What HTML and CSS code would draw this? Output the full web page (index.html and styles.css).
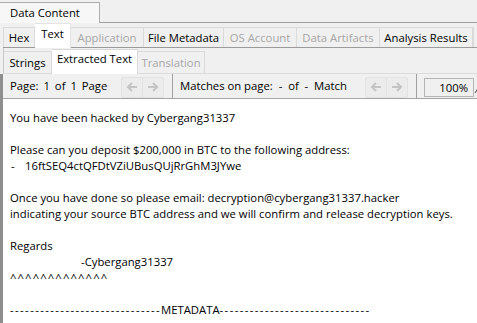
FILE: index.html
```html
<!DOCTYPE html>
<html>
<head>
<meta charset="utf-8">
<link rel="stylesheet" href="styles.css">
</head>
<body>
<div class="app">
  <div class="tabs1">
    <div class="tab1 sel">Data Content</div>
  </div>
  <div class="panel1">
    <div class="tabs2">
      <div class="tab2 t-hex">Hex</div>
      <div class="tab2 sel t-text">Text</div>
      <div class="tab2 off t-app">Application</div>
      <div class="tab2 t-fm">File Metadata</div>
      <div class="tab2 off t-os">OS Account</div>
      <div class="tab2 off t-da">Data Artifacts</div>
      <div class="tab2 t-ar">Analysis Results</div>
      <div class="tab2 t-rest"></div>
    </div>
    <div class="tabs3">
      <div class="tab3 t-str">Strings</div>
      <div class="tab3 sel t-ext">Extracted Text</div>
      <div class="tab3 off t-tr">Translation</div>
    </div>
    <div class="viewer">
      <div class="toolbar">
        <span class="tlabel page">Page: 1 of 1 Page</span>
        <div class="navbtns">
          <span class="nb"><svg width="12" height="12" viewBox="0 0 12 12"><path d="M11 6H2M6 2L2 6l4 4" fill="none" stroke="#c4c4c4" stroke-width="2"/></svg></span>
          <span class="nb"><svg width="12" height="12" viewBox="0 0 12 12"><path d="M1 6h9M6 2l4 4-4 4" fill="none" stroke="#c4c4c4" stroke-width="2"/></svg></span>
        </div>
        <span class="tsep"></span>
        <span class="tlabel matches">Matches on page:&nbsp; -&nbsp; of&nbsp; -&nbsp; Match</span>
        <div class="navbtns">
          <span class="nb"><svg width="12" height="12" viewBox="0 0 12 12"><path d="M11 6H2M6 2L2 6l4 4" fill="none" stroke="#c4c4c4" stroke-width="2"/></svg></span>
          <span class="nb"><svg width="12" height="12" viewBox="0 0 12 12"><path d="M1 6h9M6 2l4 4-4 4" fill="none" stroke="#c4c4c4" stroke-width="2"/></svg></span>
        </div>
        <span class="tsep"></span>
        <span class="zoombox">100%</span>
        <span class="edge"></span>
      </div>
      <div class="content">
<div class="line">You have been hacked by Cybergang31337</div>
<div class="line">&nbsp;</div>
<div class="line">Please can you deposit $200,000 in BTC to the following address:</div>
<div class="line"><span class="dash">-</span>16ftSEQ4ctQFDtVZiUBusQUjRrGhM3JYwe</div>
<div class="line">&nbsp;</div>
<div class="line">Once you have done so please email: decryption@cybergang31337.hacker</div>
<div class="line">indicating your source BTC address and we will confirm and release decryption keys.</div>
<div class="line">&nbsp;</div>
<div class="line">Regards</div>
<div class="line"><span class="indent"></span>-Cybergang31337</div>
<div class="line"><span class="carets">^^^^^^^^^^^^^</span></div>
<div class="line">&nbsp;</div>
<div class="line"><span class="dashes">------------------------------</span>METADATA<span class="dashes">------------------------------</span></div>
      </div>
    </div>
  </div>
</div>
</body>
</html>
```
FILE: styles.css
```css
html, body {
  margin: 0;
  padding: 0;
}
body {
  width: 477px;
  height: 323px;
  overflow: hidden;
  background: #f0f0f0;
  font-family: "Open Sans", "Noto Sans", sans-serif;
  font-size: 11.3px;
  color: #000;
}
.app {
  display: flex;
  flex-direction: column;
  height: 323px;
}
.tabs1 {
  display: flex;
  height: 22px;
  padding-top: 2px;
  box-sizing: border-box;
}
.tab1 {
  width: 100px;
  box-sizing: border-box;
  border-top: 1px solid #adadad;
  border-right: 1px solid #adadad;
  background: #f7f7f7;
  padding: 2px 0 0 10px;
  line-height: 16px;
  height: 21px;
  margin-bottom: -1px;
  position: relative;
  z-index: 1;
}
.panel1 {
  border-top: 1px solid #a0a0a0;
  display: flex;
  flex-direction: column;
  flex: 1;
}
.tabs2 {
  display: flex;
  align-items: flex-end;
  height: 24px;
  margin-left: 3px;
  border-bottom: 1px solid #9b9b9b;
}
.tab2 {
  height: 20px;
  box-sizing: border-box;
  padding: 1px 0 0 0;
  text-align: center;
  line-height: 18px;
  border: 1px solid #dadada;
  border-bottom: none;
  border-left: none;
  white-space: nowrap;
  flex: none;
}
.t-hex { width: 32px; border-left: 1px solid #dadada; }
.t-text { width: 36px; }
.t-app { width: 73px; }
.t-fm { width: 80px; }
.t-os { width: 73px; }
.t-da { width: 83px; }
.t-ar { width: 93px; }
.t-rest { width: 4px; border: none; border-left: 1px solid #dadada; }
.tab2.sel {
  background: #fff;
  padding: 0 0 4px 0;
  line-height: 20px;
  margin-bottom: -1px;
  height: 25px;
  border-color: #e3e3e3;
  position: relative;
}
.tab2.off {
  color: #a6a6a6;
}
.tabs3 {
  display: flex;
  align-items: flex-end;
  height: 25px;
  margin-left: 3px;
  border-left: 1px solid #c8c8c8;
  border-bottom: 1px solid #dcdcdc;
}
.tab3 {
  height: 22px;
  box-sizing: border-box;
  padding-top: 2px;
  text-align: center;
  line-height: 18px;
  border: 1px solid #dadada;
  border-bottom: none;
  border-left: none;
  white-space: nowrap;
  flex: none;
}
.t-str { width: 48px; }
.t-ext { width: 86px; }
.t-tr { width: 67px; }
.tab3.sel {
  background: #fff;
  height: 25px;
  padding: 0 0 4px 0;
  margin-bottom: -1px;
}
.tab3.off {
  color: #a6a6a6;
}
.viewer {
  flex: 1;
  display: flex;
  flex-direction: column;
  border-left: 3px solid #8e8e8e;
}
.toolbar {
  display: flex;
  align-items: center;
  height: 24px;
  border-bottom: 1px solid #a5a5a5;
  padding-left: 7px;
  white-space: nowrap;
}
.tlabel {
  line-height: 16px;
  flex: none;
}
.page {
  width: 111px;
  word-spacing: 2px;
}
.matches {
  width: 185px;
}
.navbtns {
  display: flex;
  flex: none;
  margin-top: 2px;
  height: 19px;
  border: 1px solid #e2e2e2;
  border-radius: 2px;
  background: #ececec;
}
.nb {
  width: 20px;
  display: flex;
  align-items: center;
  justify-content: center;
}
.nb + .nb {
  border-left: 1px solid #e2e2e2;
}
.tsep {
  width: 1px;
  flex: none;
  align-self: stretch;
  background: #a0a0a0;
  margin-left: 8px;
  margin-right: 7px;
}
.zoombox {
  flex: none;
  margin-top: 3px;
  width: 50px;
  height: 19px;
  box-sizing: border-box;
  border: 1px solid #b5b5b5;
  text-align: right;
  padding-right: 5px;
  line-height: 17px;
}
.edge {
  width: 2px;
  height: 8px;
  margin-left: 3px;
  margin-top: 6px;
  border-left: 1px solid #444;
  transform: skewX(-30deg);
}
.content {
  flex: 1;
  background: #fff;
  padding: 11px 0 0 7px;
  white-space: nowrap;
  overflow: hidden;
}
.line {
  height: 16px;
  line-height: 16px;
}
.dash {
  display: inline-block;
  width: 14px;
  padding-left: 1px;
}
.indent {
  display: inline-block;
  width: 71px;
}
.carets {
  letter-spacing: 1.1px;
}
.dashes {
  letter-spacing: 1.4px;
}
```
